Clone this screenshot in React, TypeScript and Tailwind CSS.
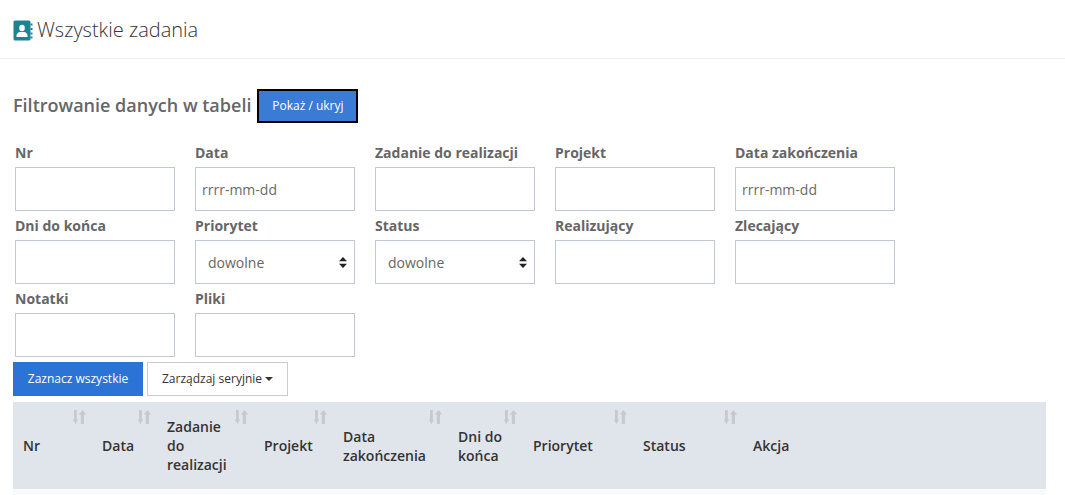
import React from "react";

function NotebookIcon() {
  return (
    <svg width="20" height="21" viewBox="0 0 20 21" className="shrink-0 mt-[2px]">
      <path d="M2 0.5h14a1.5 1.5 0 0 1 1.5 1.5v17a1.5 1.5 0 0 1-1.5 1.5H2A1.5 1.5 0 0 1 .5 19V2A1.5 1.5 0 0 1 2 .5z" fill="#1f8290" />
      <path d="M17.5 3.5h2v2h-2zM17.5 8h2v2h-2zM17.5 12.500h2v2h-2zM17.500 16.500h2v2h-2z" fill="#1f8290" />
      <ellipse cx="9" cy="8" rx="2.800" ry="3.200" fill="#fff" />
      <path d="M3.500 17v-1.500c0-2.300 2-3.500 3.500-3.500h4c1.500 0 3.500 1.200 3.500 3.500V17z" fill="#fff" />
    </svg>
  );
}

function SortIcon() {
  return (
    <svg width="15" height="14" viewBox="0 0 15 14" fill="#c6cad0">
      <path d="M2 0h2.800v9.500H6.200L3.400 14 .7 9.500H2z" />
      <path d="M8.800 14H12V4.500h2.200L10.500 0 6.800 4.500h2z" />
    </svg>
  );
}

function SelectArrows() {
  return (
    <svg width="8" height="11" viewBox="0 0 8 11" fill="#222" className="absolute right-[8px] top-[17px] pointer-events-none">
      <path d="M4 0l4 4.200H0zM4 11L0 6.800h8z" />
    </svg>
  );
}

function Field({ label, type, placeholder }: { label: string; type?: "select"; placeholder?: string }) {
  return (
    <div className="w-[160px] flex flex-col">
      <label className="h-[29px] pt-[5px] text-[14px] leading-[19px] font-bold text-[#666]">{label}</label>
      {type === "select" ? (
        <div className="relative">
          <select className="appearance-none w-full h-[44px] border border-[#c0c8d6] bg-white pl-[12px] text-[14px] text-[#666] outline-none">
            <option>dowolne</option>
          </select>
          <SelectArrows />
        </div>
      ) : (
        <input
          placeholder={placeholder}
          className="w-full h-[44px] border border-[#c0c8d6] bg-white px-[6px] text-[14px] text-[#666] placeholder:text-[#6b6b6b] outline-none"
        />
      )}
    </div>
  );
}

const columns: { w: string; label: React.ReactNode; sort: boolean }[] = [
  { w: "w-[79px]", label: "Nr", sort: true },
  { w: "w-[65px]", label: "Data", sort: true },
  { w: "w-[97px]", label: <>Zadanie<br />do<br />realizacji</>, sort: true },
  { w: "w-[79px]", label: "Projekt", sort: true },
  { w: "w-[115px]", label: <>Data<br />zakończenia</>, sort: true },
  { w: "w-[75px]", label: <>Dni do<br />końca</>, sort: true },
  { w: "w-[110px]", label: "Priorytet", sort: true },
  { w: "w-[110px]", label: "Status", sort: true },
  { w: "", label: "Akcja", sort: false },
];

export default function App() {
  return (
    <div className="w-[1065px] h-[495px] overflow-hidden bg-white font-['Open_Sans',sans-serif] text-[#666]">
      <header className="h-[59px] border-b border-[#f0f0f0] pl-[13px] flex items-center gap-[4px]">
        <NotebookIcon />
        <h1 className="text-[20px] font-light text-[#333] leading-[27px]">Wszystkie zadania</h1>
      </header>

      <div className="px-[13px] pt-[30px]">
        <div className="flex items-center gap-[6px] h-[34px]">
          <h2 className="text-[18px] leading-[24px] font-semibold text-[#666] pb-[2px]">Filtrowanie danych w tabeli</h2>
          <button className="w-[101px] h-[34px] border-[2px] border-black bg-[#3a7bd5] text-white text-[12px]">Pokaż / ukryj</button>
        </div>

        <div className="pl-[2px] pt-[15px] grid grid-cols-[repeat(5,160px)] gap-x-[20px]">
          <Field label="Nr" />
          <Field label="Data" placeholder="rrrr-mm-dd" />
          <Field label="Zadanie do realizacji" />
          <Field label="Projekt" />
          <Field label="Data zakończenia" placeholder="rrrr-mm-dd" />
          <Field label="Dni do końca" />
          <Field label="Priorytet" type="select" />
          <Field label="Status" type="select" />
          <Field label="Realizujący" />
          <Field label="Zlecający" />
          <Field label="Notatki" />
          <Field label="Pliki" />
        </div>

        <div className="flex gap-[4px] mt-[5px]">
          <button className="w-[130px] h-[34px] bg-[#2b74d6] text-white text-[12px]">Zaznacz wszystkie</button>
          <button className="w-[141px] h-[34px] border border-[#ccc] bg-white text-[#333] text-[12px] flex items-center gap-[3px] pl-[14px]">
            Zarządzaj seryjnie
            <svg width="8" height="4" viewBox="0 0 8 4" fill="#333"><path d="M0 0h8L4 4z" /></svg>
          </button>
        </div>

        <table className="mt-[6px] w-[1033px] table-fixed border-collapse">
          <thead>
            <tr className="h-[87px] bg-[#e0e4eb]">
              {columns.map((c, i) => (
                <th key={i} className={`${c.w} relative pl-[10px] pr-0 text-left align-middle text-[14px] leading-[19px] font-semibold text-[#333]`}>
                  {c.label}
                  {c.sort && (
                    <span className="absolute right-[5px] top-[8px] flex">
                      <SortIcon />
                    </span>
                  )}
                </th>
              ))}
            </tr>
          </thead>
          <tbody>
            <tr className="h-[10px] bg-[#f9fafc]"><td colSpan={9} /></tr>
          </tbody>
        </table>
      </div>
    </div>
  );
}
